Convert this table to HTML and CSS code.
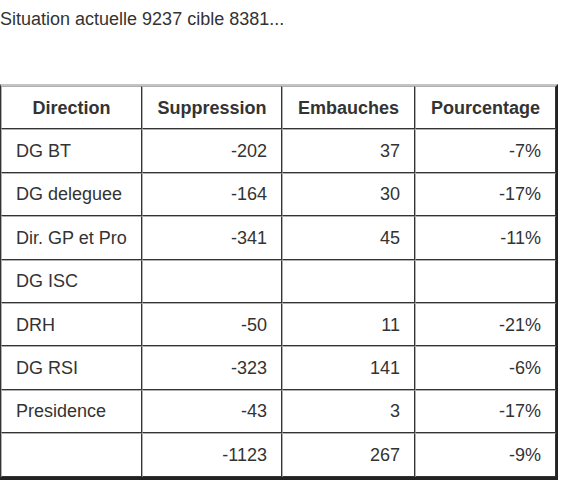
FILE: index.html
```html
<!DOCTYPE html>
<html>
<head>
<meta charset="utf-8">
<link rel="stylesheet" href="styles.css">
</head>
<body>
<p class="intro">Situation actuelle 9237 cible 8381...</p>
<table class="data">
  <colgroup>
    <col class="c1"><col class="c2"><col class="c3"><col class="c4">
  </colgroup>
  <thead>
    <tr><th>Direction</th><th>Suppression</th><th>Embauches</th><th>Pourcentage</th></tr>
  </thead>
  <tbody>
    <tr><td>DG BT</td><td class="num">-202</td><td class="num">37</td><td class="num">-7%</td></tr>
    <tr><td>DG deleguee</td><td class="num">-164</td><td class="num">30</td><td class="num">-17%</td></tr>
    <tr><td>Dir. GP et Pro</td><td class="num">-341</td><td class="num">45</td><td class="num">-11%</td></tr>
    <tr><td>DG ISC</td><td class="num"></td><td class="num"></td><td class="num"></td></tr>
    <tr><td>DRH</td><td class="num">-50</td><td class="num">11</td><td class="num">-21%</td></tr>
    <tr><td>DG RSI</td><td class="num">-323</td><td class="num">141</td><td class="num">-6%</td></tr>
    <tr><td>Presidence</td><td class="num">-43</td><td class="num">3</td><td class="num">-17%</td></tr>
    <tr><td></td><td class="num">-1123</td><td class="num">267</td><td class="num">-9%</td></tr>
  </tbody>
</table>
</body>
</html>
```

FILE: styles.css
```css
html, body {
  margin: 0;
  padding: 0;
  background: #ffffff;
}
body {
  font-family: "Liberation Sans", Arial, sans-serif;
  font-size: 18px;
  color: #333333;
}
.intro {
  margin: 9px 0 0 0;
  line-height: 21px;
}
.data {
  margin-top: 54px;
  border-collapse: separate;
  border-spacing: 0;
  table-layout: fixed;
  width: 558px;
  border-style: solid;
  border-width: 2px 2px 3px 1px;
  border-color: #c4c4c4 #222222 #222222 #333333;
}
.c1 { width: 141px; }
.c2 { width: 140px; }
.c3 { width: 133px; }
.c4 { width: 141px; }
.data tr {
  height: 43.4px;
}
.data th, .data td {
  border-style: solid;
  border-width: 1px;
  border-color: #b0b0b0 #333333 #333333 #b0b0b0;
  padding: 0 14px;
  line-height: 20px;
}
.data th {
  font-weight: bold;
  text-align: center;
}
.data td {
  text-align: left;
}
.data td.num {
  text-align: right;
}
```
